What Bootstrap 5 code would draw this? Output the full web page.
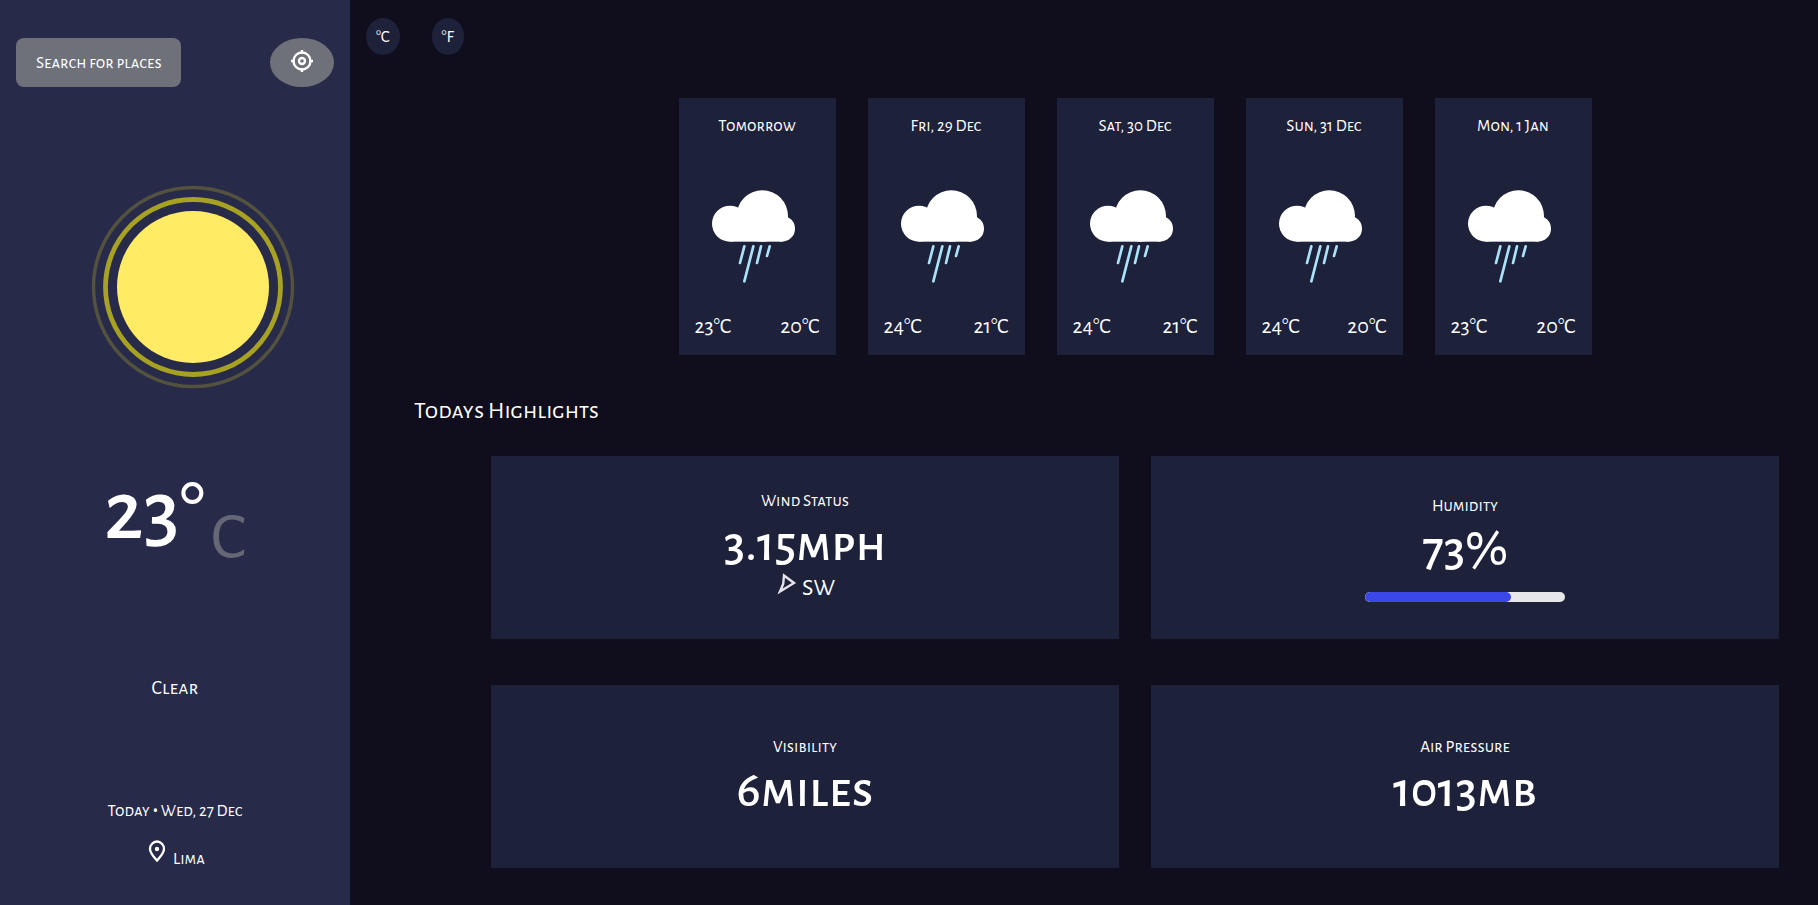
<!DOCTYPE html>
<html lang="en">
<head>
<meta charset="utf-8">
<meta name="viewport" content="width=device-width, initial-scale=1">
<title>Weather</title>
<link href="https://cdn.jsdelivr.net/npm/bootstrap@5.3.0/dist/css/bootstrap.min.css" rel="stylesheet">
<style>
  body { background: #100e1d; color: #fff; font-family: "Alegreya Sans SC", "Noto Sans", sans-serif; font-size: 17px; line-height: 24px; }
  .side-panel { background: #282a49; }
  .side-top { margin-top: 38px; }
  .search-btn, .locate-btn { background: #6e707a; color: #fff; border: 0; font: inherit; }
  .search-btn { padding: 13px 19px 12px 20px; border-radius: 8px; }
  .locate-btn { padding: 10px 20px 15px; border-radius: 50%; }
  .sun { margin: 98px 0 0 36px; }
  .now { margin-top: 81px; line-height: 84px; gap: 6px; }
  .now-value { font-size: 86px; font-weight: 500; }
  .now-unit { font-size: 68px; color: #656776; padding-top: 26px; }
  .now-sky { font-size: 20px; margin-top: 96px; }
  .now-date { margin-top: 99px; }
  .bullet { font-family: "Noto Sans", sans-serif; font-size: 14px; }
  .now-place { margin-top: 16px; }
  .units { padding: 18px 16px 0; gap: 32px; }
  .unit-btn { background: #1e213a; color: #fff; border: 0; border-radius: 50%; font: inherit; padding: 7px 10px 6px; }
  .forecast { gap: 32px; padding: 43px 0 0 102px; }
  .day { background: #1e213a; width: 157px; height: 257px; padding: 16px 16px 17px; }
  .day-icon { margin-top: 20px; }
  .day-temps { font-size: 22px; }
  .section-title { font-size: 24px; font-weight: 400; line-height: 30px; margin: 41px 0 0 64px; }
  .highlights { display: grid; grid-template-columns: 1fr; gap: 46px 32px; padding: 30px 39px 36px 39px; }
  .tile { background: #1e213a; min-height: 183px; }
  .tile-value { font-size: 51px; font-weight: 500; line-height: 56px; margin-top: 4px; }
  .tile-note { font-size: 24px; line-height: 30px; gap: 3px; padding-bottom: 4px; }
  .humidity-bar { width: 200px; height: 10px; border-radius: 8px; background: #e7e7eb; margin-top: 14px; }
  .humidity-bar .progress-bar { background: #3c47e9; border-radius: 8px; }
  @media (min-width: 992px) {
    .side-panel { flex: 0 0 350px; }
    .highlights { grid-template-columns: 1fr 1fr; padding-left: 141px; }
  }
</style>
</head>
<body>
<svg class="d-none" aria-hidden="true">
  <symbol id="rain" viewBox="120 290 285 291">
    <g fill="#fff">
      <circle cx="180" cy="397" r="54"/><circle cx="277" cy="374" r="77"/><circle cx="336" cy="412" r="39"/>
      <rect x="180" y="390" width="156" height="61"/>
    </g>
    <path d="M223 465l-13 50M250 465l-27 105M273 465l-12 50M299 465l-8 29" stroke="#aae3f9" stroke-width="8" stroke-linecap="round" fill="none"/>
  </symbol>
</svg>
<div class="d-lg-flex min-vh-100">
  <aside class="side-panel d-flex flex-column align-items-center pb-4">
    <div class="side-top d-flex justify-content-between align-self-stretch px-3">
      <button type="button" class="search-btn">Search for places</button>
      <button type="button" class="locate-btn" aria-label="Use my location">
        <svg class="d-block" width="24" height="24" viewBox="0 0 24 24" fill="none" stroke="#fff" stroke-width="2.400"><circle cx="12" cy="13" r="8.500"/><circle cx="12" cy="13" r="3"/><path d="M12 2v3.500M12 20.500v3.500M1 13h3.500M19.500 13h3.500"/></svg>
      </button>
    </div>
    <svg class="sun" width="204" height="204" viewBox="0 0 204 204" fill="none">
      <circle cx="102" cy="102" r="99.500" stroke="#53523f" stroke-width="3.500"/>
      <circle cx="102" cy="102" r="87.500" stroke="#a8a223" stroke-width="4.800"/>
      <circle cx="102" cy="102" r="76" fill="#ffeb64"/>
    </svg>
    <div class="now d-flex"><span class="now-value">23°</span><span class="now-unit">C</span></div>
    <div class="now-sky">Clear</div>
    <div class="now-date">Today <span class="bullet">•</span> Wed, 27 Dec</div>
    <div class="now-place d-flex">
      <svg width="24" height="24" viewBox="0 0 24 24" fill="none" stroke="#fff" stroke-width="2.300"><path d="M12 21.500c-3-3.500-7-7.300-7-11.500a7 7.500 0 0 1 14 0c0 4.200-4 8-7 11.500z"/><circle cx="12" cy="10" r="2.200" fill="#fff" stroke="none"/></svg>
      <span class="ps-1 pt-2">Lima</span>
    </div>
  </aside>
  <main class="flex-grow-1">
    <div class="units d-flex">
      <button type="button" class="unit-btn">°C</button>
      <button type="button" class="unit-btn">°F</button>
    </div>
    <section class="forecast d-flex flex-wrap justify-content-center" id="forecast"></section>
    <h2 class="section-title">Todays Highlights</h2>
    <section class="highlights">
      <div class="tile d-flex flex-column align-items-center justify-content-center">
        <div>Wind Status</div>
        <div class="tile-value">3.15mph</div>
        <div class="tile-note d-flex">
          <svg width="24" height="24" viewBox="0 0 24 24" fill="none" stroke="#e4e4ea" stroke-width="2.400"><path d="M9 2.500l10 7.500-14 8.500 3.200-7.500z"/></svg>
          <span>SW</span>
        </div>
      </div>
      <div class="tile d-flex flex-column align-items-center justify-content-center">
        <div>Humidity</div>
        <div class="tile-value">73%</div>
        <div class="humidity-bar progress" role="progressbar" aria-label="Humidity" aria-valuenow="73" aria-valuemin="0" aria-valuemax="100"><div class="progress-bar" style="width:73%"></div></div>
      </div>
      <div class="tile d-flex flex-column align-items-center justify-content-center">
        <div>Visibility</div>
        <div class="tile-value">6miles</div>
      </div>
      <div class="tile d-flex flex-column align-items-center justify-content-center">
        <div>Air Pressure</div>
        <div class="tile-value">1013mb</div>
      </div>
    </section>
  </main>
</div>
<script src="https://cdn.jsdelivr.net/npm/bootstrap@5.3.0/dist/js/bootstrap.bundle.min.js"></script>
<script>
  const days = [['Tomorrow', 23, 20], ['Fri, 29 Dec', 24, 21], ['Sat, 30 Dec', 24, 21], ['Sun, 31 Dec', 24, 20], ['Mon, 1 Jan', 23, 20]];
  document.getElementById('forecast').innerHTML = days.map(([name, max, min]) => `
    <div class="day d-flex flex-column justify-content-between align-items-center">
      <div>${name}</div>
      <svg class="day-icon" width="95" height="97" role="img" aria-label="Showers"><use href="#rain"/></svg>
      <div class="day-temps d-flex justify-content-between align-self-stretch"><span>${max}°C</span><span>${min}°C</span></div>
    </div>`).join('');
</script>
</body>
</html>
